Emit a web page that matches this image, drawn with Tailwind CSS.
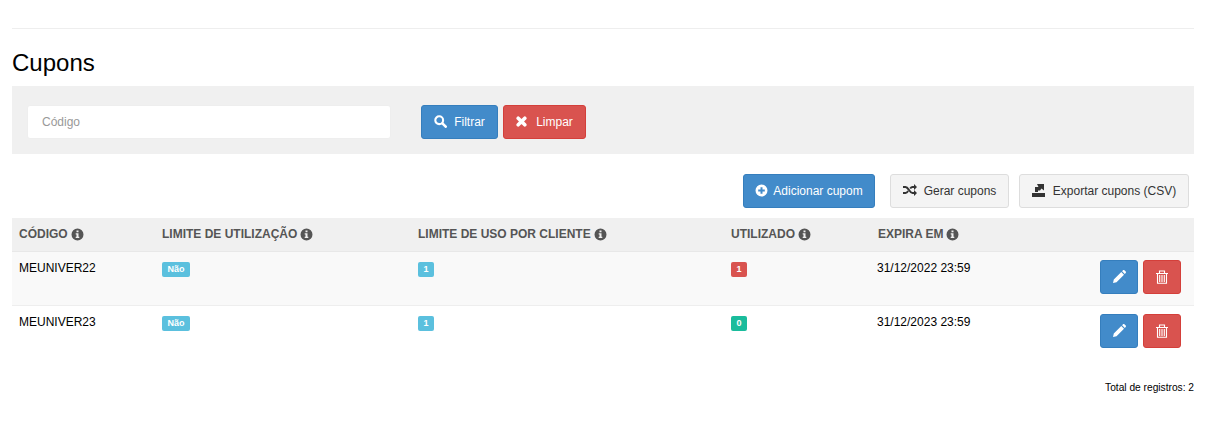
<!DOCTYPE html>
<html lang="pt-BR">
  <head>
    <meta charset="UTF-8" />
    <title>Cupons</title>
    <script src="https://cdn.jsdelivr.net/npm/@tailwindcss/browser@4"></script>
  </head>
  <body class="bg-white text-black font-['Liberation_Sans',Arial,sans-serif] text-[12px] leading-[17px] overflow-hidden">
    <main class="pl-3 pr-[11px] pt-7">
      <hr class="border-0 border-t border-[#eeeeee]" />

      <h1 class="mt-[21px] text-[24px] leading-[26px] font-normal">Cupons</h1>

      <!-- Filtro -->
      <form class="mt-[10px] h-[68px] bg-[#f0f0f0] flex items-start pt-[19px] pl-[15px]">
        <input
          type="text"
          placeholder="Código"
          class="w-[364px] h-[34px] bg-white border border-[#eeeeee] rounded-[3px] px-[14px] text-[12px] placeholder:text-[#999999] outline-none"
        />
        <button type="button" class="ml-[30px] w-[77px] h-[34px] bg-[#428bca] border border-[#357ebd] rounded-[3px] text-white flex items-center justify-center gap-[7px]">
          <svg class="w-[13px] h-[13px] -mt-[2px]" viewBox="0 0 13 13" fill="none" stroke="white"><circle cx="5.2" cy="5.2" r="3.9" stroke-width="2.100"/><path d="M8.400 8.400l3.300 3.300" stroke-width="2.600" stroke-linecap="round"/></svg>
          Filtrar
        </button>
        <button type="button" class="ml-[5px] w-[83px] h-[34px] bg-[#d9534f] border border-[#d43f3a] rounded-[3px] text-white flex items-center justify-center gap-[9px]">
          <svg class="w-[11px] h-[11px] -mt-[2px]" viewBox="0 0 11 11" fill="none" stroke="white"><path d="M2.200 2.200l6.600 6.600M8.800 2.200l-6.600 6.600" stroke-width="3.600" stroke-linecap="round"/></svg>
          Limpar
        </button>
      </form>

      <!-- Acoes -->
      <div class="mt-5 flex justify-end pr-[5px] text-[12px]">
        <button type="button" class="w-[132px] h-[34px] bg-[#428bca] border border-[#357ebd] rounded-[3px] text-white flex items-center justify-center gap-[5px]">
          <svg class="w-[13px] h-[13px] -mt-[2px]" viewBox="0 0 13 13"><path fill="white" fill-rule="evenodd" d="M6.500.500a6 6 0 1 1 0 12a6 6 0 0 1 0-12zM5.500 3.200v2.300H3.200v2h2.300v2.300h2V7.500h2.300v-2H7.500V3.200z"/></svg>
          Adicionar cupom
        </button>
        <button type="button" class="ml-[15px] w-[119px] h-[34px] bg-[#f4f4f4] border border-[#dddddd] rounded-[3px] text-[#333333] flex items-center justify-center gap-[7px]">
          <svg class="w-[14px] h-[12px] -mt-[2px]" viewBox="0 0 14 12" fill="none" stroke="#333333" stroke-width="2"><path d="M0 3h2.500c3 0 4 6 7 6H12M0 9h2.500c1.200 0 2-1 2.600-2M7.200 4.500C7.800 3.700 8.500 3 9.500 3H12"/><path d="M11 0L14 3l-3 3zM11 6L14 9l-3 3z" fill="#333333" stroke="none"/></svg>
          Gerar cupons
        </button>
        <button type="button" class="ml-[10px] w-[170px] h-[34px] bg-[#f4f4f4] border border-[#dddddd] rounded-[3px] text-[#333333] flex items-center justify-center gap-[8px]">
          <svg class="w-[13px] h-[14px] -mt-[3px]" viewBox="0 0 13 14"><path fill="#333333" d="M0 10h13v4H0zM3 9V4h3.500L5 1h7v6.500L9.500 5.500 8 7.500H6V9z"/></svg>
          Exportar cupons (CSV)
        </button>
      </div>

      <!-- Tabela -->
      <table class="mt-[10px] w-full table-fixed border-collapse">
        <colgroup>
          <col class="w-[143px]" />
          <col class="w-[256px]" />
          <col class="w-[313px]" />
          <col class="w-[146px]" />
          <col class="w-[190px]" />
          <col />
        </colgroup>
        <thead>
          <tr class="h-[33px] bg-[#f0f0f0] border-b border-[#e8e8e8] text-left text-[#555555] uppercase">
            <th class="pl-[7px] font-bold"><span class="inline-flex items-center gap-[3px]">Código <svg class="w-[13px] h-[13px]" viewBox="0 0 13 13"><path fill="#555555" fill-rule="evenodd" d="M6.500.500a6 6 0 1 1 0 12a6 6 0 0 1 0-12zM5.500 2.500v1.700h2V2.500zM4.700 5.200v1.200h.8v2.300h-.8v1.200h3.600V8.700h-.8V5.200z"/></svg></span></th>
            <th class="pl-[7px] font-bold"><span class="inline-flex items-center gap-[3px]">Limite de utilização <svg class="w-[13px] h-[13px]" viewBox="0 0 13 13"><path fill="#555555" fill-rule="evenodd" d="M6.500.500a6 6 0 1 1 0 12a6 6 0 0 1 0-12zM5.500 2.500v1.700h2V2.500zM4.700 5.200v1.200h.8v2.300h-.8v1.200h3.600V8.700h-.8V5.200z"/></svg></span></th>
            <th class="pl-[7px] font-bold"><span class="inline-flex items-center gap-[3px]">Limite de uso por cliente <svg class="w-[13px] h-[13px]" viewBox="0 0 13 13"><path fill="#555555" fill-rule="evenodd" d="M6.500.500a6 6 0 1 1 0 12a6 6 0 0 1 0-12zM5.500 2.500v1.700h2V2.500zM4.700 5.200v1.200h.8v2.300h-.8v1.200h3.600V8.700h-.8V5.200z"/></svg></span></th>
            <th class="pl-[7px] font-bold"><span class="inline-flex items-center gap-[3px]">Utilizado <svg class="w-[13px] h-[13px]" viewBox="0 0 13 13"><path fill="#555555" fill-rule="evenodd" d="M6.500.500a6 6 0 1 1 0 12a6 6 0 0 1 0-12zM5.500 2.500v1.700h2V2.500zM4.700 5.200v1.200h.8v2.300h-.8v1.200h3.600V8.700h-.8V5.200z"/></svg></span></th>
            <th class="pl-[8px] font-bold"><span class="inline-flex items-center gap-[2px]">Expira em <svg class="w-[13px] h-[13px]" viewBox="0 0 13 13"><path fill="#555555" fill-rule="evenodd" d="M6.500.500a6 6 0 1 1 0 12a6 6 0 0 1 0-12zM5.500 2.500v1.700h2V2.500zM4.700 5.200v1.200h.8v2.300h-.8v1.200h3.600V8.700h-.8V5.200z"/></svg></span></th>
            <th></th>
          </tr>
        </thead>
        <tbody>
          <tr class="h-[54px] bg-[#f9f9f9] border-b border-[#eeeeee] align-top">
            <td class="pl-[7px] pt-2">MEUNIVER22</td>
            <td class="pl-[7px] pt-[8px]"><span class="inline-flex h-[15px] px-[5.5px] items-center rounded-[2px] bg-[#5bc0de] text-white text-[9px] font-bold">Não</span></td>
            <td class="pl-[7px] pt-[8px]"><span class="inline-flex h-[15px] px-[5.5px] items-center rounded-[2px] bg-[#5bc0de] text-white text-[9px] font-bold">1</span></td>
            <td class="pl-[7px] pt-[8px]"><span class="inline-flex h-[15px] px-[5.5px] items-center rounded-[2px] bg-[#d9534f] text-white text-[9px] font-bold">1</span></td>
            <td class="pl-[7px] pt-2">31/12/2022 23:59</td>
            <td class="pt-2 pr-[13px]">
              <div class="flex justify-end gap-[5px]">
                <button type="button" class="w-[38px] h-[34px] bg-[#428bca] border border-[#357ebd] rounded-[3px] flex items-center justify-center">
                  <svg class="w-[13px] h-[13px]" viewBox="0 0 13 13"><path fill="white" d="M0 13l.8-3.500L8.300 2l2.700 2.700-7.500 7.500zM9.100 1.200l.9-.9c.4-.4 1-.4 1.400 0l1.300 1.300c.4.4.4 1 0 1.400l-.9.900z"/></svg>
                </button>
                <button type="button" class="w-[38px] h-[34px] bg-[#d9534f] border border-[#d43f3a] rounded-[3px] flex items-center justify-center">
                  <svg class="w-[12px] h-[14px]" viewBox="0 0 12 14" fill="none" stroke="white"><path d="M0 3.500h12M3.500 3V1h5v2M1.500 3.500v9.800h9V3.500M3.700 5v7M6 5v7M8.300 5v7" stroke-width="1.100"/></svg>
                </button>
              </div>
            </td>
          </tr>
          <tr class="h-[54px] bg-white align-top">
            <td class="pl-[7px] pt-2">MEUNIVER23</td>
            <td class="pl-[7px] pt-[8px]"><span class="inline-flex h-[15px] px-[5.5px] items-center rounded-[2px] bg-[#5bc0de] text-white text-[9px] font-bold">Não</span></td>
            <td class="pl-[7px] pt-[8px]"><span class="inline-flex h-[15px] px-[5.5px] items-center rounded-[2px] bg-[#5bc0de] text-white text-[9px] font-bold">1</span></td>
            <td class="pl-[7px] pt-[8px]"><span class="inline-flex h-[15px] px-[5.5px] items-center rounded-[2px] bg-[#1abc9c] text-white text-[9px] font-bold">0</span></td>
            <td class="pl-[7px] pt-2">31/12/2023 23:59</td>
            <td class="pt-2 pr-[13px]">
              <div class="flex justify-end gap-[5px]">
                <button type="button" class="w-[38px] h-[34px] bg-[#428bca] border border-[#357ebd] rounded-[3px] flex items-center justify-center">
                  <svg class="w-[13px] h-[13px]" viewBox="0 0 13 13"><path fill="white" d="M0 13l.8-3.500L8.300 2l2.700 2.700-7.500 7.500zM9.100 1.200l.9-.9c.4-.4 1-.4 1.400 0l1.300 1.300c.4.4.4 1 0 1.400l-.9.900z"/></svg>
                </button>
                <button type="button" class="w-[38px] h-[34px] bg-[#d9534f] border border-[#d43f3a] rounded-[3px] flex items-center justify-center">
                  <svg class="w-[12px] h-[14px]" viewBox="0 0 12 14" fill="none" stroke="white"><path d="M0 3.500h12M3.500 3V1h5v2M1.500 3.500v9.800h9V3.500M3.700 5v7M6 5v7M8.300 5v7" stroke-width="1.100"/></svg>
                </button>
              </div>
            </td>
          </tr>
        </tbody>
      </table>

      <p class="mt-[22px] text-right text-[10.2px] leading-[14px]">Total de registros: 2</p>
    </main>
  </body>
</html>
